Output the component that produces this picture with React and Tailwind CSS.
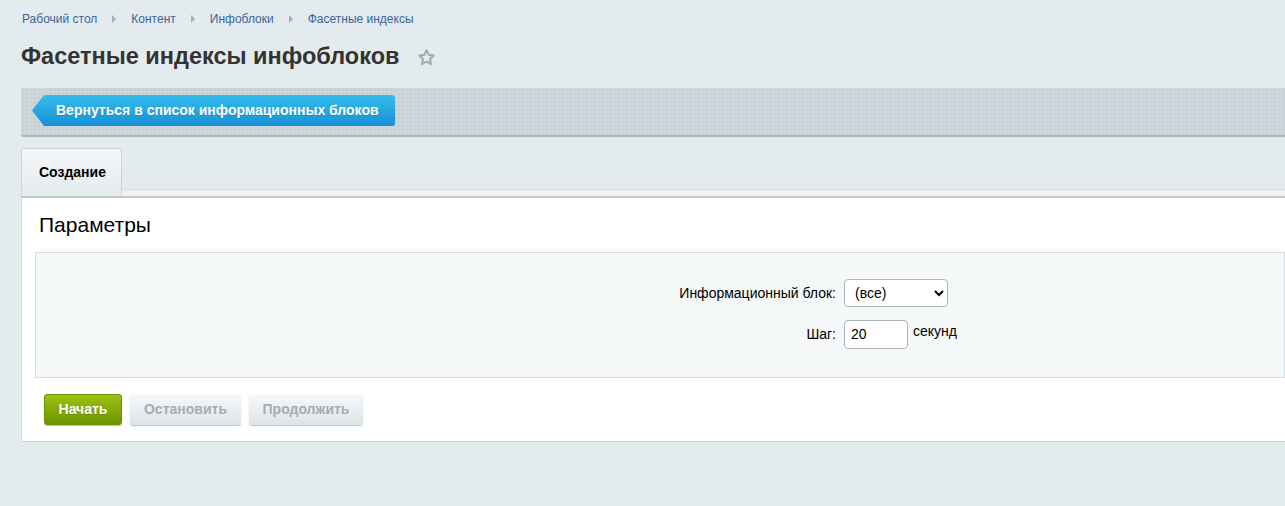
import React, { useState } from "react";

const Crumb = ({ children, last }) => (
  <>
    <a href="#" className="text-[#3a659b] hover:underline">{children}</a>
    {!last && (
      <span className="mx-[15px] inline-block w-0 h-0 border-y-[4px] border-y-transparent border-l-[4px] border-l-[#a3adb2]" />
    )}
  </>
);

const App = () => {
  const [iblock, setIblock] = useState("all");
  const [step, setStep] = useState("20");

  return (
    <div className="min-h-[506px] bg-[#e4ebee] pl-[21px] pt-[12px] font-['Liberation_Sans',Arial,sans-serif] text-[14px] text-black overflow-hidden">
      {/* breadcrumbs */}
      <div className="flex items-center text-[12px] leading-[14px] pl-px">
        <Crumb>Рабочий стол</Crumb>
        <Crumb>Контент</Crumb>
        <Crumb>Инфоблоки</Crumb>
        <Crumb last>Фасетные индексы</Crumb>
      </div>

      {/* title */}
      <div className="flex items-center mt-[17px] h-[26px]">
        <h1 className="text-[23.5px] font-bold text-[#333] leading-[26px]">Фасетные индексы инфоблоков</h1>
        <svg className="ml-[18px] mt-[2px]" width="19" height="19" viewBox="0 0 24 24" fill="none" stroke="#a1abb1" strokeWidth="2.6" strokeLinejoin="round">
          <path d="M12 2.8l2.8 5.9 6.4.8-4.7 4.4 1.2 6.4L12 17.2l-5.7 3.1 1.2-6.4-4.7-4.4 6.4-.8z" />
        </svg>
      </div>

      {/* toolbar */}
      <div className="mt-[19px] h-[49px] border-b-2 border-b-[#aab6bb] rounded-l-[2px] bg-[#cdd7db] bg-[radial-gradient(#c2cdd1_0.6px,transparent_1px)] bg-[length:4px_4px] flex items-center pl-[11px] pb-[2px]">
        <a
          href="#"
          className="h-[31px] w-[363px] flex items-center pl-[24px] text-white font-bold text-[14px] bg-gradient-to-b from-[#35bdee] to-[#1790d3] [clip-path:polygon(12px_0,100%_0,100%_100%,12px_100%,0_50%)] rounded-r-[3px] [text-shadow:0_1px_0_rgba(0,0,0,0.15)]"
        >
          Вернуться в список информационных блоков
        </a>
      </div>

      {/* tabs */}
      <div className="mt-[11px] flex">
        <div className="w-[101px] h-[48px] border border-b-0 border-[#cdd5d9] rounded-t-[3px] bg-gradient-to-b from-[#f3f6f7] to-[#e5ebed] flex items-start pt-[13px] pl-[17px] font-bold text-[14px]">
          Создание
        </div>
        <div className="flex-1 flex flex-col justify-end">
          <div className="h-[7px] border-t border-[#d6dde0] bg-[#eef2f3]" />
        </div>
      </div>

      {/* panel */}
      <div className="bg-white border-t-2 border-t-[#bfc8cc] border-l border-l-[#d2d9dc] border-b border-b-[#cdd5d9] pb-[16px]">
        <div className="pl-[17px] pt-[15px] h-[54px] text-[21px] leading-[24px]">Параметры</div>
        <div className="ml-[13px] h-[126px] bg-[#f5f8f9] border border-[#d5dde1] pt-[26px]">
          <div className="flex items-center h-[28px]">
            <div className="w-[808px] text-right pr-[8px]">Информационный блок:</div>
            <select
              value={iblock}
              onChange={(e) => setIblock(e.target.value)}
              className="h-[28px] w-[104px] bg-white border border-[#a9b3b8] rounded-[4px] pl-[6px] text-[14px]"
            >
              <option value="all">(все)</option>
            </select>
          </div>
          <div className="flex items-center h-[28px] mt-[13px]">
            <div className="w-[808px] text-right pr-[8px]">Шаг:</div>
            <input
              value={step}
              onChange={(e) => setStep(e.target.value)}
              className="h-[29px] w-[64px] bg-white border border-[#a9b3b8] rounded-[4px] px-[6px] text-[14px]"
            />
            <span className="ml-[5px] -mt-[6px]">секунд</span>
          </div>
        </div>
        <div className="flex gap-[8px] pl-[22px] mt-[16px]">
          <button className="h-[31px] w-[78px] rounded-[3px] border border-[#6b9100] bg-gradient-to-b from-[#9cc113] to-[#6c9600] text-white font-bold text-[14px] shadow-[0_1px_1px_rgba(0,0,0,0.25)] [text-shadow:0_1px_0_rgba(0,0,0,0.2)]">
            Начать
          </button>
          <button className="h-[31px] w-[111px] rounded-[3px] bg-gradient-to-b from-[#f7f9fa] to-[#dde4e7] text-[#a4adb2] font-bold text-[14px] shadow-[0_1px_1px_rgba(0,0,0,0.25)]">
            Остановить
          </button>
          <button className="h-[31px] w-[114px] rounded-[3px] bg-gradient-to-b from-[#f7f9fa] to-[#dde4e7] text-[#a4adb2] font-bold text-[14px] shadow-[0_1px_1px_rgba(0,0,0,0.25)]">
            Продолжить
          </button>
        </div>
      </div>
    </div>
  );
};

export default App;
